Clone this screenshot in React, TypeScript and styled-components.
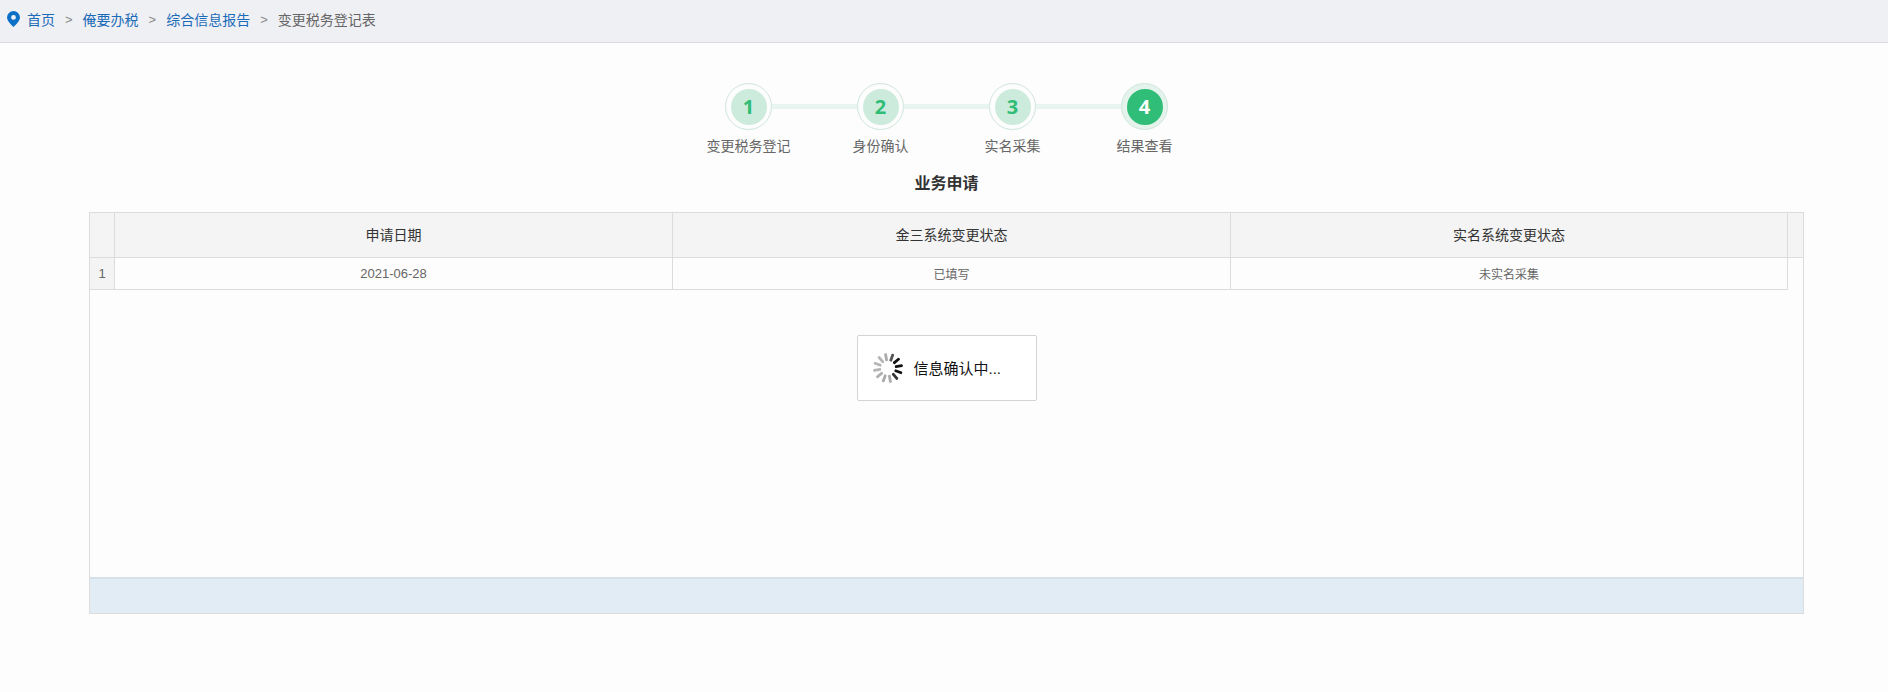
import React from "react";
import styled, { createGlobalStyle } from "styled-components";

const Global = createGlobalStyle`
  html, body { margin: 0; padding: 0; background: #fdfdfd; }
  body { font-family: "Liberation Sans", "Noto Sans CJK SC", sans-serif; }
`;

const Page = styled.div`
  width: 1888px;
  height: 692px;
  display: flex;
  flex-direction: column;
  overflow: hidden;
  background: #fdfdfd;
`;

const Crumbs = styled.nav`
  height: 43px;
  flex: none;
  box-sizing: border-box;
  display: flex;
  align-items: center;
  padding-left: 7px;
  padding-bottom: 4px;
  background: #eff0f4;
  border-bottom: 1px solid #d9dbde;
  font-size: 14px;
`;

const PinIcon = styled.svg`
  width: 13px;
  height: 16px;
  margin-right: 7px;
  margin-top: -1px;
`;

const CrumbLink = styled.span`
  color: #1a6bb8;
`;

const CrumbCurrent = styled.span`
  color: #666;
`;

const Sep = styled.span`
  color: #888;
  font-size: 13px;
  margin: 0 10px;
`;

const Main = styled.main`
  padding: 0 84px 0 89px;
  display: flex;
  flex-direction: column;
  align-items: center;
`;

const Track = styled.div`
  margin-top: 40px;
  display: flex;
  align-items: center;
`;

const Ring = styled.div<{ $active?: boolean }>`
  width: 47px;
  height: 47px;
  box-sizing: border-box;
  border-radius: 50%;
  flex: none;
  display: flex;
  align-items: center;
  justify-content: center;
  border: 1px solid #cfe6db;
  background: ${(p) => (p.$active ? "#e4f3ec" : "#fdfdfd")};
`;

const Dot = styled.div<{ $active?: boolean }>`
  width: 36px;
  height: 36px;
  border-radius: 50%;
  display: flex;
  align-items: center;
  justify-content: center;
  font-family: "Open Sans", "Liberation Sans", sans-serif;
  font-size: 20px;
  font-weight: 700;
  color: ${(p) => (p.$active ? "#fff" : "#2fbd77")};
  background: ${(p) => (p.$active ? "#2fbd77" : "#cdebdc")};
`;

const Line = styled.div`
  width: 85px;
  height: 5px;
  flex: none;
  background: #e9f5f0;
`;

const Labels = styled.div`
  margin-top: 6px;
  display: grid;
  grid-template-columns: repeat(4, 132px);
`;

const Label = styled.div`
  text-align: center;
  font-size: 14px;
  line-height: 20px;
  color: #666;
  white-space: nowrap;
`;

const Title = styled.h2`
  margin: 16px 0 0;
  font-size: 16px;
  line-height: 24px;
  font-weight: 700;
  color: #333;
`;

const Panel = styled.section`
  margin-top: 16px;
  width: 1715px;
  height: 402px;
  box-sizing: border-box;
  display: flex;
  flex-direction: column;
  border: 1px solid #dcdcdc;
  background: #fdfdfd;
`;

const Grid = styled.div`
  display: grid;
  grid-template-columns: 25px 558px 558px 557px 15px;
`;

const Head = styled.div<{ $last?: boolean }>`
  height: 45px;
  box-sizing: border-box;
  display: flex;
  align-items: center;
  justify-content: center;
  padding-bottom: 2px;
  background: #f4f4f4;
  border-bottom: 1px solid #dcdcdc;
  border-right: ${(p) => (p.$last ? "none" : "1px solid #dcdcdc")};
  font-size: 14px;
  color: #333;
`;

const Cell = styled.div<{ $index?: boolean; $blank?: boolean; $number?: boolean }>`
  height: 32px;
  box-sizing: border-box;
  display: flex;
  align-items: center;
  justify-content: center;
  background: ${(p) => (p.$index ? "#f4f4f4" : "#fdfdfd")};
  border-bottom: ${(p) => (p.$blank ? "none" : "1px solid #dcdcdc")};
  border-right: ${(p) => (p.$blank ? "none" : "1px solid #dcdcdc")};
  font-size: ${(p) => (p.$number ? "13px" : "12px")};
  color: #666;
`;

const Body = styled.div`
  flex: 1;
  display: flex;
  justify-content: center;
  align-items: flex-start;
  padding-top: 45px;
`;

const Loading = styled.div`
  width: 180px;
  height: 66px;
  box-sizing: border-box;
  display: flex;
  align-items: center;
  padding: 0 0 1px 14px;
  gap: 10px;
  background: #fff;
  border: 1px solid #d4d4d4;
  border-radius: 2px;
  font-size: 15px;
  color: #111;
`;

const Spinner = styled.svg`
  width: 32px;
  height: 32px;
  flex: none;
`;

const Foot = styled.div`
  height: 36px;
  flex: none;
  box-sizing: border-box;
  background: #e2ecf5;
  border-top: 2px solid #d5e0ea;
  margin-top: auto;
`;

const crumbs = ["首页", "俺要办税", "综合信息报告"];
const steps = ["变更税务登记", "身份确认", "实名采集", "结果查看"];
const spokes = [
  "#111", "#111", "#111", "#333", "#aaa", "#aaa",
  "#b0b0b0", "#b5b5b5", "#b5b5b5", "#b5b5b5", "#aaa", "#555",
];

export default function App() {
  return (
    <Page>
      <Global />
      <Crumbs>
        <PinIcon viewBox="0 0 13 16">
          <path
            fill="#0e6fc7"
            fillRule="evenodd"
            d="M6.5 0a6.5 6.5 0 0 0-6.5 6.5c0 4 6.5 9.5 6.5 9.5s6.5-5.5 6.5-9.5a6.5 6.5 0 0 0-6.5-6.5zm0 4a2.4 2.4 0 1 1 0 4.8 2.4 2.4 0 0 1 0-4.8z"
          />
        </PinIcon>
        {crumbs.map((c) => (
          <React.Fragment key={c}>
            <CrumbLink>{c}</CrumbLink>
            <Sep>&gt;</Sep>
          </React.Fragment>
        ))}
        <CrumbCurrent>变更税务登记表</CrumbCurrent>
      </Crumbs>
      <Main>
        <Track>
          {steps.map((s, i) => (
            <React.Fragment key={s}>
              {i > 0 && <Line />}
              <Ring $active={i === 3}>
                <Dot $active={i === 3}>{i + 1}</Dot>
              </Ring>
            </React.Fragment>
          ))}
        </Track>
        <Labels>
          {steps.map((s) => (
            <Label key={s}>{s}</Label>
          ))}
        </Labels>
        <Title>业务申请</Title>
        <Panel>
          <Grid>
            <Head />
            <Head>申请日期</Head>
            <Head>金三系统变更状态</Head>
            <Head>实名系统变更状态</Head>
            <Head $last />
            <Cell $index $number>1</Cell>
            <Cell $number>2021-06-28</Cell>
            <Cell>已填写</Cell>
            <Cell>未实名采集</Cell>
            <Cell $blank />
          </Grid>
          <Body>
            <Loading>
              <Spinner viewBox="0 0 32 32">
                {spokes.map((color, i) => (
                  <rect
                    key={i}
                    x="14.6"
                    y="1"
                    width="2.8"
                    height="8"
                    rx="1"
                    fill={color}
                    transform={`rotate(${50 + i * 30} 16 16)`}
                  />
                ))}
              </Spinner>
              信息确认中...
            </Loading>
          </Body>
          <Foot />
        </Panel>
      </Main>
    </Page>
  );
}
